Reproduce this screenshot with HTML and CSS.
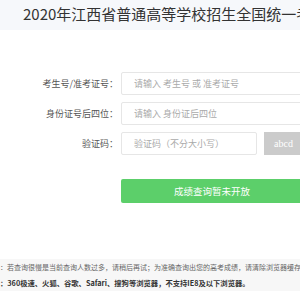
FILE: index.html
```html
<!DOCTYPE html>
<html lang="zh-CN">
<head>
    <meta charset="UTF-8">
    <meta name="viewport" content="width=device-width, initial-scale=1.0">
    <title>2020年江西省普通高等学校招生全国统一考试成绩查询</title>
    <link rel="stylesheet" href="styles.css">
</head>
<body>
    <div class="header">
        <h1>2020年江西省普通高等学校招生全国统一考试成绩查询</h1>
    </div>

    <form class="form" onsubmit="return false;">
        <div class="row">
            <label class="label" for="ksh">考生号/准考证号：</label>
            <input class="input" id="ksh" type="text" placeholder="请输入 考生号 或 准考证号">
        </div>
        <div class="row">
            <label class="label" for="sfz">身份证号后四位：</label>
            <input class="input" id="sfz" type="text" placeholder="请输入 身份证后四位">
        </div>
        <div class="row">
            <label class="label" for="yzm">验证码：</label>
            <input class="input input-code" id="yzm" type="text" placeholder="验证码（不分大小写）">
            <span class="captcha">abcd</span>
        </div>
        <button class="btn" type="button" disabled>成绩查询暂未开放</button>
    </form>

    <div class="notice">
        <p>：若查询很慢是当前查询人数过多，请稍后再试；为准确查询出您的高考成绩，请清除浏览器缓存后再查询。</p>
        <p class="strong">：360极速、火狐、谷歌、Safari、搜狗等浏览器，不支持IE8及以下浏览器。</p>
    </div>
</body>
</html>
```

FILE: styles.css
```css
* {
    margin: 0;
    padding: 0;
    box-sizing: border-box;
}

html {
    overflow: hidden;
}

body {
    font-family: "Noto Sans CJK SC", "Noto Sans", sans-serif;
    background: #fff;
    color: #333;
    width: 300px;
    overflow: hidden;
}

.header {
    height: 30px;
    background: #f6f8fb;
    padding-left: 23px;
    white-space: nowrap;
    overflow: hidden;
}

.header h1 {
    font-size: 15px;
    font-weight: 400;
    line-height: 28px;
    color: #333;
}

.form {
    padding-top: 42px;
}

.row {
    display: flex;
    align-items: center;
    margin-bottom: 7px;
}

.label {
    width: 118px;
    flex-shrink: 0;
    margin-right: 3px;
    text-align: right;
    font-size: 9px;
    color: #555;
    white-space: nowrap;
}

.input {
    width: 182px;
    height: 23px;
    flex-shrink: 0;
    border: 1px solid #e6e6e6;
    border-radius: 2px;
    padding-left: 12px;
    font-family: inherit;
    font-size: 9px;
    color: #333;
    outline: none;
}

.input::placeholder {
    color: #aaa;
}

.input-code {
    width: 136px;
}

.captcha {
    width: 60px;
    height: 23px;
    flex-shrink: 0;
    margin-left: 7px;
    padding-left: 10px;
    background: #cbcbcb;
    color: #fff;
    font-family: "Liberation Serif", serif;
    font-size: 10px;
    line-height: 23px;
}

.btn {
    display: block;
    width: 182px;
    height: 24px;
    margin: 24px 0 0 121px;
    background: #5ccf6a;
    border: none;
    border-radius: 2px;
    color: #fff;
    font-family: inherit;
    font-size: 9.5px;
}

.notice {
    margin-top: 56px;
    background: #f7f7f7;
    white-space: nowrap;
    overflow: hidden;
}

.notice p {
    font-size: 7px;
    line-height: 16px;
    color: #666;
}

.notice .strong {
    font-size: 7.3px;
    font-weight: 700;
    color: #333;
}
```
